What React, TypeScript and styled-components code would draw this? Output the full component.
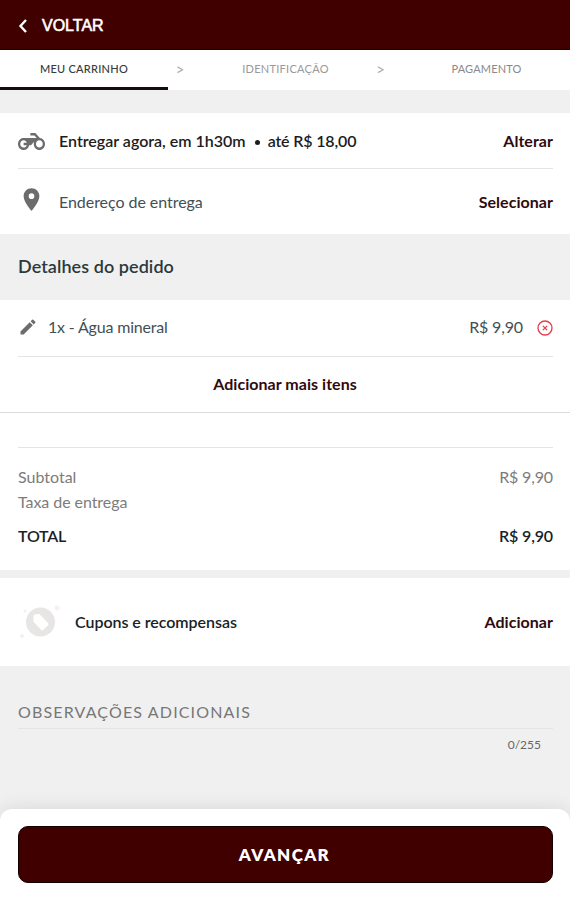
import React from "react";
import styled, { createGlobalStyle } from "styled-components";
import { MdPlace, MdEdit } from "react-icons/md";

const GlobalStyle = createGlobalStyle`
  * { box-sizing: border-box; }
  body { margin: 0; background: #f0f0f0; font-family: "Lato", sans-serif; }
  button { font-family: inherit; cursor: pointer; }
`;

const Page = styled.div`
  display: flex;
  flex-direction: column;
  width: 570px;
  height: 900px;
  background: #f0f0f0;
  overflow: hidden;
`;

const Header = styled.header`
  display: flex;
  align-items: center;
  height: 50px;
  padding: 3px 18px 0;
  gap: 14px;
  background: #400000;
  border-bottom: 1px solid #150000;
`;

const Label = styled.span<{ $size?: number; $weight?: number; $color?: string; $spacing?: number }>`
  font-size: ${(p) => p.$size ?? 16}px;
  font-weight: ${(p) => p.$weight ?? 400};
  color: ${(p) => p.$color ?? "#425054"};
  letter-spacing: ${(p) => p.$spacing ?? 0}px;
  line-height: 20px;
  white-space: pre;
`;

const BackLabel = styled(Label)`
  font-family: "Liberation Sans", Arial, sans-serif;
  -webkit-text-stroke: 0.6px #fff;
`;

const Steps = styled.nav`
  display: grid;
  grid-template-columns: 168px 24px 186px 5px 1fr;
  height: 40px;
  background: #fff;
`;

const Step = styled.div<{ $active?: boolean; $nudge?: number }>`
  display: flex;
  align-items: center;
  justify-content: center;
  padding: 0 0 ${(p) => (p.$active ? 0 : 2)}px ${(p) => p.$nudge ?? 0}px;
  border-bottom: ${(p) => (p.$active ? "3px solid #170b10" : "0")};
`;

const Section = styled.section<{ $top?: number }>`
  margin-top: ${(p) => p.$top ?? 0}px;
  padding: 0 17px 0 18px;
  background: #fff;
`;

const Row = styled.div<{ $height: number; $line?: boolean; $pad?: number; $lift?: number }>`
  display: flex;
  align-items: center;
  height: ${(p) => p.$height}px;
  padding-top: ${(p) => p.$pad ?? 0}px;
  padding-bottom: ${(p) => p.$lift ?? 0}px;
  border-bottom: ${(p) => (p.$line ? "1px solid #e4e4e4" : "0")};
`;

const IconSlot = styled.div<{ $width: number; $drop?: number; $lift?: number }>`
  display: flex;
  flex: none;
  width: ${(p) => p.$width}px;
  padding-top: ${(p) => p.$drop ?? 0}px;
  padding-bottom: ${(p) => p.$lift ?? 0}px;
  color: #6c6c6c;
`;

const Dot = styled.i`
  width: 5px;
  height: 5px;
  margin: 4px 8px 0 9px;
  border-radius: 50%;
  background: #1c1c1c;
`;

const Action = styled.button`
  margin-left: auto;
  padding: 0;
  border: 0;
  background: none;
  color: #300a0e;
  font-size: 16px;
  font-weight: 700;
  letter-spacing: 0.04px;
  line-height: 20px;
`;

const Amount = styled(Label)`
  margin-left: auto;
  letter-spacing: -0.15px;
`;

const Remove = styled.button`
  display: flex;
  margin: 2px 0 0 14px;
  padding: 0;
  border: 0;
  background: none;
`;

const SectionTitle = styled.h2`
  height: 66px;
  margin: 0;
  padding: 0 18px;
  color: #2b393d;
  font-size: 18px;
  font-weight: 600;
  letter-spacing: 0.07px;
  line-height: 65px;
`;

const AddMore = styled(Row)`
  margin: 0 -17px 0 -18px;
  border-bottom: 1px solid #dcdcdc;
  button { margin: 0 auto; }
`;

const Notes = styled.section`
  flex: 1;
  padding: 31px 17px 0 18px;
`;

const NotesField = styled.div`
  display: flex;
  height: 32px;
  padding-top: 5px;
  border-bottom: 1px solid #e4e4e4;
`;

const Counter = styled.div`
  display: flex;
  justify-content: flex-end;
  padding: 6px 12px 0 0;
`;

const Footer = styled.footer`
  height: 91px;
  padding: 17px 17px 0 18px;
  background: #fff;
  border-radius: 12px 12px 0 0;
  box-shadow: 0 -2px 18px rgba(0, 0, 0, 0.09);
`;

const Submit = styled.button`
  width: 100%;
  height: 57px;
  padding: 0 2px 0 0;
  border: 1px solid #140000;
  border-radius: 10px;
  background: #400000;
  color: #fff;
  font-size: 17px;
  font-weight: 800;
  letter-spacing: 1.35px;
`;

const MotorcycleIcon = () => (
  <svg width="27" height="29" viewBox="0 0 24 24" preserveAspectRatio="none" fill="currentColor">
    <path d="M19.44 9.03 15.41 5H11v2h3.59l2 2H5c-2.8 0-5 2.2-5 5s2.2 5 5 5c2.46 0 4.45-1.69 4.9-4h1.65l2.77-2.77c-.21.54-.32 1.14-.32 1.77 0 2.8 2.2 5 5 5s5-2.2 5-5c0-2.65-1.97-4.77-4.56-4.97zM7.82 15C7.4 16.15 6.28 17 5 17c-1.63 0-3-1.37-3-3s1.37-3 3-3c1.28 0 2.4.85 2.82 2H5v2h2.82zM19 17c-1.66 0-3-1.34-3-3s1.34-3 3-3 3 1.34 3 3-1.34 3-3 3z" />
  </svg>
);

const CouponIcon = () => (
  <svg width="44" height="40" viewBox="0 0 44 40">
    <circle cx="22.5" cy="20" r="14.500" fill="#e8e5e5" />
    <path d="M15.5 14.5q0-2 2-2.2l4-.2 8.500 8.900q1 1.200 0 2.300l-4.500 4.500q-1.200 1-2.300 0l-7.700-8z" fill="#fff" />
    <g fill="#f4f1f1">
      <circle cx="39" cy="6" r="2.500" />
      <circle cx="7" cy="9" r="1.500" />
      <circle cx="4" cy="34" r="2" />
    </g>
  </svg>
);

export default function App() {
  return (
    <>
      <GlobalStyle />
      <Page>
        <Header>
          <svg width="10" height="16" viewBox="0 0 10 16" fill="none" stroke="#fff" strokeWidth="2.4">
            <path d="M8 2 2.500 8 8 14" />
          </svg>
          <BackLabel $color="#fff">VOLTAR</BackLabel>
        </Header>
        <Steps>
          <Step $active><Label $size={11} $weight={500} $color="#333b40" $spacing={0.25}>MEU CARRINHO</Label></Step>
          <Step><Label $size={15} $color="#aaa">&gt;</Label></Step>
          <Step $nudge={1}><Label $size={11} $color="#999" $spacing={0.27}>IDENTIFICAÇÃO</Label></Step>
          <Step><Label $size={15} $color="#aaa">&gt;</Label></Step>
          <Step $nudge={20}><Label $size={11} $color="#8a8a8a" $spacing={0.15}>PAGAMENTO</Label></Step>
        </Steps>
        <Section $top={23}>
          <Row $height={56} $line>
            <IconSlot $width={41} $drop={2}><MotorcycleIcon /></IconSlot>
            <Label $weight={600} $color="#1c1c1c">Entregar agora, em 1h30m</Label>
            <Dot />
            <Label $weight={600} $color="#1c1c1c" $spacing={-0.15}>até R$ 18,00</Label>
            <Action>Alterar</Action>
          </Row>
          <Row $height={65}>
            <IconSlot $width={41} $lift={4}><MdPlace size={27} /></IconSlot>
            <Label $spacing={-0.05}>Endereço de entrega</Label>
            <Action>Selecionar</Action>
          </Row>
        </Section>
        <SectionTitle>Detalhes do pedido</SectionTitle>
        <Section>
          <Row $height={57} $line $lift={3}>
            <IconSlot $width={30}><MdEdit size={20} /></IconSlot>
            <Label $spacing={-0.18}>1x - Água mineral</Label>
            <Amount>R$ 9,90</Amount>
            <Remove aria-label="Remover">
              <svg width="16" height="16" viewBox="0 0 16 16" fill="none" stroke="#ea3a4c" strokeWidth="1.3">
                <circle cx="8" cy="8" r="7" />
                <path d="m5.900 5.900 4.200 4.200m0-4.200-4.200 4.200" />
              </svg>
            </Remove>
          </Row>
          <AddMore $height={56} $lift={1}><Action>Adicionar mais itens</Action></AddMore>
          <Row $height={35} $line />
          <Row $height={43} $pad={15}><Label $color="#7c7c7c">Subtotal</Label><Amount $color="#7c7c7c">R$ 9,90</Amount></Row>
          <Row $height={25} $lift={3}><Label $color="#7c7c7c" $spacing={-0.07}>Taxa de entrega</Label></Row>
          <Row $height={40} $lift={1}><Label $weight={600} $color="#172226" $spacing={-0.2}>TOTAL</Label><Amount $weight={600} $color="#172226">R$ 9,90</Amount></Row>
          <Row $height={14} />
        </Section>
        <Section $top={8}>
          <Row $height={88}>
            <IconSlot $width={57}><CouponIcon /></IconSlot>
            <Label $weight={600} $color="#172226" $spacing={-0.04}>Cupons e recompensas</Label>
            <Action>Adicionar</Action>
          </Row>
        </Section>
        <Notes>
          <NotesField><Label $color="#777" $spacing={1.15}>OBSERVAÇÕES ADICIONAIS</Label></NotesField>
          <Counter><Label $size={12} $color="#666">0/255</Label></Counter>
        </Notes>
        <Footer><Submit>AVANÇAR</Submit></Footer>
      </Page>
    </>
  );
}
